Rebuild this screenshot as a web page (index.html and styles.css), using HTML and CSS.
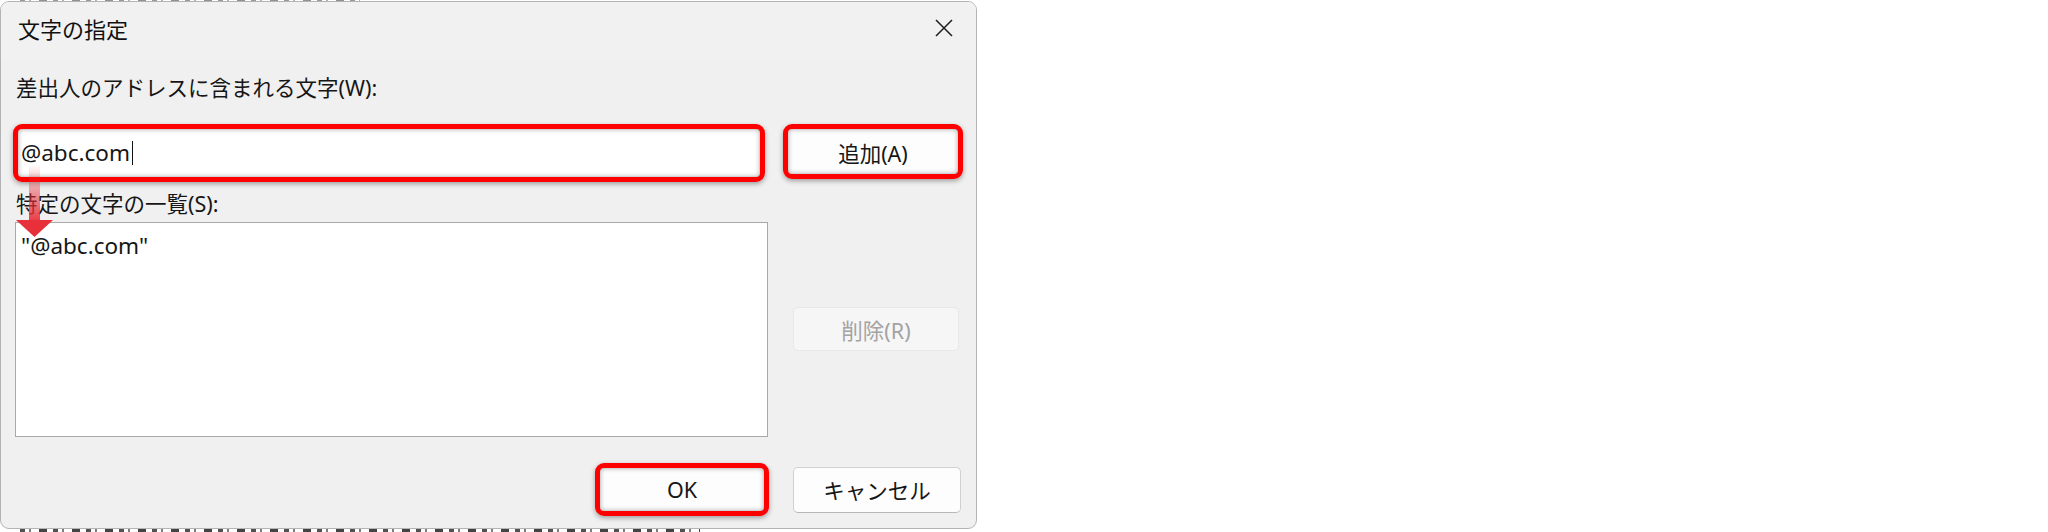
FILE: index.html
```html
<!DOCTYPE html>
<html lang="ja">
<head>
<meta charset="utf-8">
<title>文字の指定</title>
<link rel="stylesheet" href="styles.css">
</head>
<body>
<div class="strip strip-top"></div>
<div class="dialog">
  <div class="titlebar">
    <span class="title">文字の指定</span>
    <span class="close">
      <svg width="20" height="20" viewBox="0 0 20 20"><path d="M2 2 L18 18 M18 2 L2 18" stroke="#222" stroke-width="1.6" fill="none"/></svg>
    </span>
  </div>
  <div class="content">
    <div class="label label-first">差出人のアドレスに含まれる文字(W):</div>
    <div class="row row-input">
      <div class="mark mark-input">
        <div class="textbox">@abc.com<span class="caret"></span></div>
      </div>
      <div class="mark mark-add">
        <div class="btn btn-add">追加(A)</div>
      </div>
    </div>
    <div class="label label-second">特定の文字の一覧(S):</div>
    <div class="row row-list">
      <div class="listbox">"@abc.com"</div>
      <div class="side">
        <div class="btn btn-disabled">削除(R)</div>
      </div>
    </div>
    <div class="row footer">
      <div class="mark mark-ok">
        <div class="btn btn-ok">OK</div>
      </div>
      <div class="btn btn-cancel">キャンセル</div>
    </div>
  </div>
  <svg class="arrow" width="44" height="80" viewBox="0 0 44 80">
    <defs>
      <linearGradient id="shaft" x1="0" y1="0" x2="0" y2="1">
        <stop offset="0" stop-color="#e8303a" stop-opacity="0"/>
        <stop offset="1" stop-color="#e8303a" stop-opacity="0.95"/>
      </linearGradient>
    </defs>
    <rect x="16" y="0" width="11" height="58" fill="url(#shaft)"/>
    <polygon points="3,56 40,56 21.5,73" fill="#e8303a"/>
  </svg>
</div>
<div class="strip strip-bottom"></div>
</body>
</html>
```

FILE: styles.css
```css
html, body {
  margin: 0;
  padding: 0;
  background: #ffffff;
}
body {
  font-family: "Noto Sans", "Noto Sans CJK JP", sans-serif;
  color: #161616;
  width: 2048px;
  height: 532px;
  overflow: hidden;
}
.strip {
  height: 2px;
  margin-left: 20px;
  background: repeating-linear-gradient(90deg, #333 0 5px, transparent 5px 9px, #666 9px 11px, transparent 11px 19px, #222 19px 27px, transparent 27px 33px);
}
.strip-top {
  height: 1px;
  width: 340px;
  opacity: 0.5;
}
.strip-bottom {
  height: 3px;
  width: 680px;
  opacity: 0.85;
}
.dialog {
  position: relative;
  width: 975px;
  height: 526px;
  border: 1px solid #b4b4b4;
  border-radius: 9px;
  background: #f0f0f0;
  overflow: hidden;
}
.titlebar {
  height: 57px;
  background: #f1f1f1;
  display: flex;
  align-items: center;
  justify-content: space-between;
  padding: 0 22px 0 17px;
}
.title {
  font-size: 22px;
  line-height: 28px;
  color: #111;
  margin-top: -3px;
}
.close {
  display: flex;
  margin-top: -5px;
}
.content {
  padding: 0 0 0 12px;
}
.label {
  font-size: 21.5px;
  line-height: 28px;
  margin-left: 3px;
}
.label-first {
  margin-top: 15px;
}
.row {
  display: flex;
}
.row-input {
  margin-top: 22px;
  align-items: flex-start;
}
.mark {
  border: 5px solid #ff0000;
  border-radius: 9px;
  box-shadow: 0 2px 5px rgba(0, 0, 0, 0.35), inset 0 0 5px rgba(0, 0, 0, 0.3);
  box-sizing: border-box;
  display: flex;
}
.mark-input {
  width: 752px;
  height: 58px;
}
.textbox {
  flex: 1;
  background: #ffffff;
  border-radius: 3px;
  margin: 1px;
  font-size: 22.5px;
  line-height: 44px;
  padding-left: 2px;
  display: flex;
  align-items: center;
  box-shadow: inset 0 0 4px rgba(0, 0, 0, 0.25);
}
.caret {
  display: inline-block;
  width: 1px;
  height: 24px;
  background: #111;
  margin-left: 2px;
}
.mark-add {
  width: 180px;
  height: 55px;
  margin-left: 18px;
}
.btn {
  display: flex;
  align-items: center;
  justify-content: center;
  font-size: 21.5px;
  box-sizing: border-box;
}
.btn-add {
  flex: 1;
  background: #fdfdfd;
  margin: 1px;
  border-radius: 3px;
  box-shadow: inset 0 0 4px rgba(0, 0, 0, 0.25);
  padding-top: 1px;
}
.label-second {
  margin-top: 8px;
}
.row-list {
  margin-top: 4px;
}
.listbox {
  width: 753px;
  height: 215px;
  margin-left: 2px;
  box-sizing: border-box;
  background: #ffffff;
  border: 1px solid #a9a9a9;
  font-size: 22.5px;
  line-height: 28px;
  padding: 9px 0 0 5px;
}
.side {
  padding-top: 85px;
  margin-left: 25px;
}
.btn-disabled {
  width: 166px;
  height: 44px;
  background: #f6f6f6;
  border: 1px solid #e8e8e8;
  border-radius: 5px;
  color: #a3a3a3;
}
.footer {
  margin-top: 26px;
  align-items: center;
  padding-left: 582px;
}
.mark-ok {
  width: 174px;
  height: 53px;
}
.btn-ok {
  flex: 1;
  background: #fdfdfd;
  margin: 1px;
  border-radius: 3px;
  box-shadow: inset 0 0 4px rgba(0, 0, 0, 0.25);
}
.btn-cancel {
  width: 168px;
  height: 46px;
  margin-left: 24px;
  background: #fdfdfd;
  border: 1px solid #d0d0d0;
  border-bottom-color: #b8b8b8;
  border-radius: 5px;
}
.arrow {
  position: absolute;
  left: 12px;
  top: 162px;
}
```
